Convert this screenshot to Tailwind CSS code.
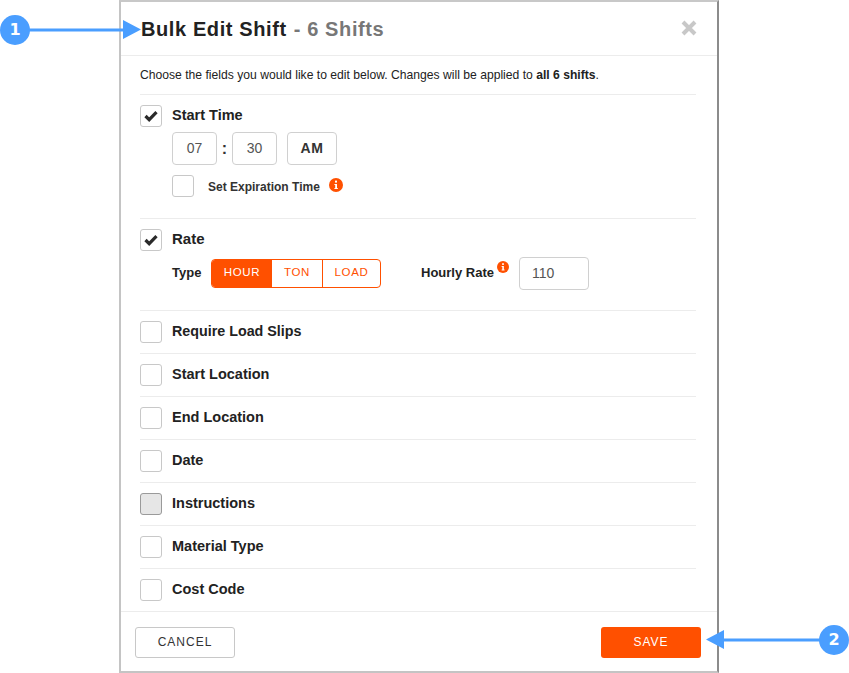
<!DOCTYPE html>
<html lang="en">
<head>
  <meta charset="UTF-8" />
  <title>Bulk Edit Shift</title>
  <script src="https://cdn.jsdelivr.net/npm/@tailwindcss/browser@4"></script>
</head>
<body class="bg-white font-['Liberation_Sans',Arial,sans-serif]">
  <div class="relative w-[849px] h-[673px] overflow-hidden">
    <!-- modal -->
    <div class="ml-[119px] w-[600px] h-[673px] flex flex-col bg-white border-l-2 border-l-[#c4c4c4] border-t-2 border-t-[#c8c8c8] border-b-2 border-b-[#c4c4c4] border-r-2 border-r-[#8c8c8c]">
      <!-- header -->
      <div class="h-[54px] shrink-0 flex items-center justify-between pl-[20px] pr-[20px] border-b border-[#ececec]">
        <h1 class="text-[20px] font-bold tracking-[0.6px] text-[#222]">Bulk Edit Shift <span class="text-[#777] ml-[1px]">- 6 Shifts</span></h1>
        <svg width="16" height="16" viewBox="0 0 16 16" class="-mt-[1px]"><path d="M2 2 L14 14 M14 2 L2 14" stroke="#c8c8c8" stroke-width="4"/></svg>
      </div>

      <div class="flex-1 flex flex-col pl-[19px] pr-[21px]">
        <p class="h-[39px] shrink-0 flex items-center border-b border-[#ececec] text-[12.15px] text-[#222] whitespace-pre">Choose the fields you would like to edit below. Changes will be applied to <b>all 6 shifts</b>.</p>

        <!-- start time -->
        <div class="h-[124px] shrink-0 pt-[10px] border-b border-[#ececec]">
          <div class="flex items-center gap-[10px]">
            <span class="w-[22px] h-[22px] flex items-center justify-center border border-[#c8c8c8] rounded-[3px]">
              <svg width="14" height="12" viewBox="0 0 14 12"><path d="M1.5 6 L5.2 9.7 L12.5 2.2" fill="none" stroke="#2a2a2a" stroke-width="3.2"/></svg>
            </span>
            <span class="text-[14.5px] font-bold text-[#222]">Start Time</span>
          </div>
          <div class="flex items-center ml-[32px] mt-[5px]">
            <span class="w-[45px] h-[33px] flex items-center justify-center border border-[#d0d0d0] rounded-[4px] text-[14px] text-[#555]">07</span>
            <span class="w-[15px] text-center text-[16px] font-bold text-[#333]">:</span>
            <span class="w-[45px] h-[33px] flex items-center justify-center border border-[#d0d0d0] rounded-[4px] text-[14px] text-[#555]">30</span>
            <span class="w-[50px] h-[33px] ml-[10px] flex items-center justify-center border border-[#d0d0d0] rounded-[4px] text-[14px] font-bold tracking-[0.5px] text-[#333]">AM</span>
          </div>
          <div class="flex items-center ml-[32px] mt-[10px]">
            <span class="w-[22px] h-[22px] border border-[#c8c8c8] rounded-[3px]"></span>
            <span class="ml-[14px] mt-[1px] text-[12px] font-bold text-[#333]">Set Expiration Time</span>
            <svg width="14" height="14" viewBox="0 0 14 14" class="ml-[9px] -mt-[2px]"><circle cx="7" cy="7" r="7" fill="#ff5000"/><rect x="6" y="2.6" width="2" height="2" fill="#fff"/><path d="M5.4 5.9 H8 V10 H8.8 V11 H5.4 V10 H6.2 V6.9 H5.4 Z" fill="#fff"/></svg>
          </div>
        </div>

        <!-- rate -->
        <div class="h-[92px] shrink-0 pt-[10px] border-b border-[#ececec]">
          <div class="flex items-center gap-[10px]">
            <span class="w-[22px] h-[22px] flex items-center justify-center border border-[#c8c8c8] rounded-[3px]">
              <svg width="14" height="12" viewBox="0 0 14 12"><path d="M1.5 6 L5.2 9.7 L12.5 2.2" fill="none" stroke="#2a2a2a" stroke-width="3.2"/></svg>
            </span>
            <span class="-mt-[2px] text-[15px] font-bold text-[#222]">Rate</span>
          </div>
          <div class="flex items-center ml-[32px] mt-[5px] h-[34px]">
            <span class="w-[39px] text-[13px] font-bold text-[#222]">Type</span>
            <div class="flex h-[29px] border border-[#ff5000] rounded-[4px] text-[11.5px] tracking-[0.7px] overflow-hidden">
              <span class="w-[60px] flex items-center justify-center bg-[#ff5000] text-white">HOUR</span>
              <span class="w-[51px] flex items-center justify-center text-[#ff5000] border-r border-[#ff5000]">TON</span>
              <span class="w-[57px] flex items-center justify-center text-[#ff5000]">LOAD</span>
            </div>
            <span class="ml-[40px] text-[13px] font-bold text-[#222]">Hourly Rate</span>
            <svg width="12" height="12" viewBox="0 0 14 14" class="ml-[3px] -mt-[12px]"><circle cx="7" cy="7" r="7" fill="#ff5000"/><rect x="6" y="2.6" width="2" height="2" fill="#fff"/><path d="M5.4 5.9 H8 V10 H8.8 V11 H5.4 V10 H6.2 V6.9 H5.4 Z" fill="#fff"/></svg>
            <span class="w-[70px] h-[33px] ml-[10px] pl-[12px] flex items-center border border-[#d0d0d0] rounded-[4px] text-[14px] text-[#555]">110</span>
          </div>
        </div>

        <!-- simple rows -->
        <div class="h-[43px] shrink-0 flex items-center gap-[10px] border-b border-[#ececec]">
          <span class="w-[22px] h-[22px] border border-[#c8c8c8] rounded-[3px]"></span>
          <span class="text-[14.3px] font-bold text-[#222]">Require Load Slips</span>
        </div>
        <div class="h-[43px] shrink-0 flex items-center gap-[10px] border-b border-[#ececec]">
          <span class="w-[22px] h-[22px] border border-[#c8c8c8] rounded-[3px]"></span>
          <span class="text-[14.5px] font-bold text-[#222]">Start Location</span>
        </div>
        <div class="h-[43px] shrink-0 flex items-center gap-[10px] border-b border-[#ececec]">
          <span class="w-[22px] h-[22px] border border-[#c8c8c8] rounded-[3px]"></span>
          <span class="text-[14.5px] font-bold text-[#222]">End Location</span>
        </div>
        <div class="h-[43px] shrink-0 flex items-center gap-[10px] border-b border-[#ececec]">
          <span class="w-[22px] h-[22px] border border-[#c8c8c8] rounded-[3px]"></span>
          <span class="text-[14.5px] font-bold text-[#222]">Date</span>
        </div>
        <div class="h-[43px] shrink-0 flex items-center gap-[10px] border-b border-[#ececec]">
          <span class="w-[22px] h-[22px] bg-[#e6e6e6] border border-[#9a9a9a] rounded-[3px]"></span>
          <span class="text-[14.5px] font-bold text-[#222]">Instructions</span>
        </div>
        <div class="h-[43px] shrink-0 flex items-center gap-[10px] border-b border-[#ececec]">
          <span class="w-[22px] h-[22px] border border-[#c8c8c8] rounded-[3px]"></span>
          <span class="text-[14.5px] font-bold text-[#222]">Material Type</span>
        </div>
        <div class="h-[42px] shrink-0 flex items-center gap-[10px]">
          <span class="w-[22px] h-[22px] border border-[#c8c8c8] rounded-[3px]"></span>
          <span class="text-[14.5px] font-bold text-[#222]">Cost Code</span>
        </div>
      </div>

      <!-- footer -->
      <div class="h-[60px] shrink-0 flex items-start justify-between pl-[14px] pr-[16px] pt-[15px] border-t border-[#ececec]">
        <button class="w-[100px] h-[31px] pb-[2px] border border-[#c8c8c8] rounded-[3px] text-[12px] tracking-[1px] text-[#333]">CANCEL</button>
        <button class="w-[100px] h-[31px] pb-[2px] bg-[#ff5000] rounded-[3px] text-[12px] tracking-[1px] text-white">SAVE</button>
      </div>
    </div>

    <!-- annotation 1 -->
    <div class="absolute left-0 top-[15px] w-[30px] h-[30px] rounded-full bg-[#4a9eff] flex items-center justify-center text-white text-[16px] font-bold font-['DejaVu_Sans',sans-serif]">1</div>
    <svg class="absolute left-[28px] top-[19px]" width="114" height="22" viewBox="0 0 114 22"><path d="M0 9.5 H95 V1 L113 10.5 L95 20 V12.5 H0 Z" fill="#4a9eff"/></svg>

    <!-- annotation 2 -->
    <div class="absolute left-[819px] top-[625px] w-[30px] h-[30px] rounded-full bg-[#4a9eff] flex items-center justify-center text-white text-[16px] font-bold font-['DejaVu_Sans',sans-serif]">2</div>
    <svg class="absolute left-[706px] top-[629px]" width="116" height="22" viewBox="0 0 116 22"><path d="M116 9.5 H18 V1 L0 10.5 L18 20 V12.5 H116 Z" fill="#4a9eff"/></svg>
  </div>
</body>
</html>
